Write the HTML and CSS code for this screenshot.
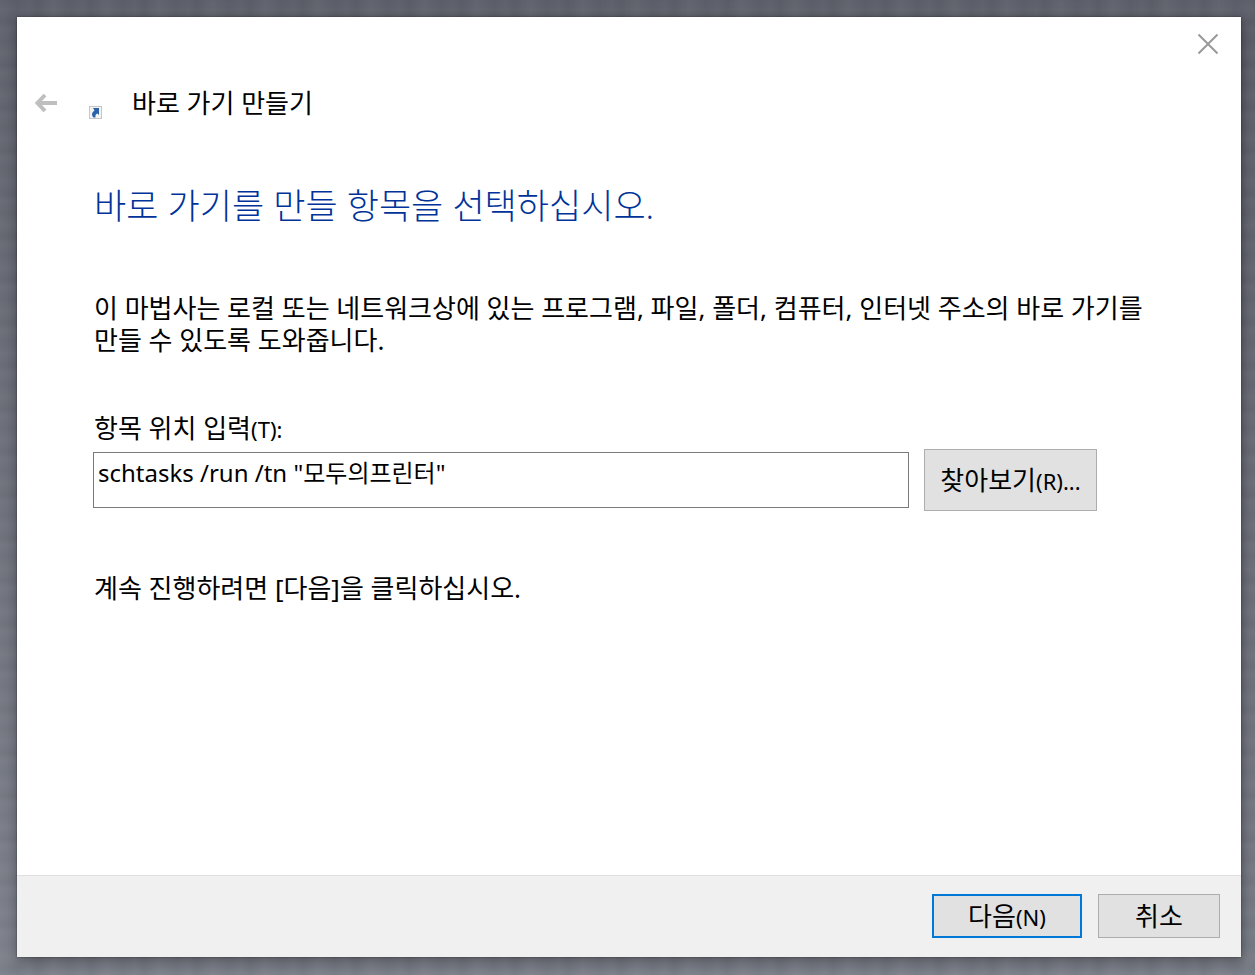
FILE: index.html
```html
<!DOCTYPE html>
<html lang="ko">
<head>
    <meta charset="UTF-8">
    <meta name="viewport" content="width=device-width, initial-scale=1">
    <title>바로 가기 만들기</title>
    <link rel="stylesheet" href="styles.css">
</head>
<body>

<form class="dialog">
    <div class="titlebar">
        <button type="button" class="icon-btn" aria-label="닫기">
            <svg width="22" height="22" viewBox="0 0 22 22"><path d="M1.5 1.5L20.5 20.5M20.5 1.5L1.5 20.5" fill="none" stroke="#999" stroke-width="2"/></svg>
        </button>
    </div>

    <header class="header">
        <button type="button" class="icon-btn" aria-label="뒤로" disabled>
            <svg width="24" height="20" viewBox="0 0 24 20"><path d="M23 10H4M11 2L3.500 10L11 18" fill="none" stroke="#bfbfbf" stroke-width="4"/></svg>
        </button>
        <svg class="shortcut-icon" width="13" height="13" viewBox="0 0 13 13">
            <rect x="0.500" y="0.500" width="12" height="12" fill="#f3f3f3" stroke="#c6c6c6"/>
            <path d="M4 2H10V9L8.500 7.500C7 8 6 9 6.500 11.500H4.500C2 9 3 6 5.500 4.500Z" fill="#2b61a7"/>
        </svg>
        <span class="title">바로 가기 만들기</span>
    </header>

    <main class="content">
        <h1>바로 가기를 만들 항목을 선택하십시오.</h1>
        <p class="intro">이 마법사는 로컬 또는 네트워크상에 있는 프로그램, 파일, 폴더, 컴퓨터, 인터넷 주소의 바로 가기를 만들 수 있도록 도와줍니다.</p>
        <label for="location">항목 위치 입력<span class="key">(T):</span></label>
        <div class="location-row">
            <input type="text" id="location" class="location" value='schtasks /run /tn "모두의프린터"'>
            <button type="button" class="btn btn-browse">찾아보기<span class="key">(R)...</span></button>
        </div>
        <p class="hint">계속 진행하려면 [다음]을 클릭하십시오.</p>
    </main>

    <footer class="footer">
        <button type="submit" class="btn btn-next">다음<span class="key">(N)</span></button>
        <button type="button" class="btn btn-cancel">취소</button>
    </footer>
</form>

</body>
</html>
```
FILE: styles.css
```css
* { box-sizing: border-box; }
body {
    display: flex;
    min-height: 100vh;
    margin: 0;
    padding: 17px 14px 18px 17px;
    font: 26px/32px "Noto Sans", "Noto Sans CJK KR", sans-serif;
    color: #000;
    background:
        repeating-linear-gradient(90deg, rgba(255,255,255,.03), rgba(0,0,0,.02) 17px, rgba(255,255,255,.01) 29px, rgba(0,0,0,.03) 38px, rgba(255,255,255,.03) 53px),
        repeating-linear-gradient(0deg, rgba(255,255,255,.02), rgba(0,0,0,.03) 7px, rgba(255,255,255,.02) 19px, rgba(0,0,0,.02) 31px, rgba(255,255,255,.02) 43px),
        linear-gradient(#5d606a, #7b7f89);
}
h1, p { margin: 0; }
button, input { font: inherit; color: inherit; }

.dialog { display: flex; flex: 1; flex-direction: column; background: #fff; box-shadow: 0 0 2px rgba(0,0,0,.4), 2px 4px 12px rgba(0,0,0,.35); }
.titlebar { display: flex; justify-content: flex-end; padding: 16px 22px 0; }
.icon-btn { display: flex; padding: 0; border: none; background: none; }

.header { display: flex; align-items: center; padding: 32px 17px 0; }
.shortcut-icon { margin: 18px 30px 0 31px; }

.content { flex: 1; padding: 63px 76px 0 77px; }
h1 { font-size: 35px; font-weight: 300; line-height: 48px; color: #003399; }
.intro { margin-top: 62px; word-break: keep-all; }
label { display: block; margin-top: 56px; }
.key { font-size: 22px; }
.location-row { display: flex; align-items: center; gap: 15px; margin: 4px 68px 0 -1px; }
.location { flex: 1; min-width: 0; height: 56px; padding: 0 4px 18px; border: 1px solid #7a7a7a; border-radius: 0; background: #fff; font-size: 24px; outline: none; }
.hint { margin-top: 61px; }

.btn { height: 44px; padding: 0; border: 1px solid #adadad; background: #e1e1e1; }
.btn-browse { width: 173px; height: 62px; }
.btn-next { width: 150px; border: 2px solid #0078d7; }
.btn-cancel { width: 122px; }

.footer { display: flex; justify-content: flex-end; gap: 16px; padding: 18px 21px 19px; border-top: 1px solid #dfdfdf; background: #f0f0f0; }
```
